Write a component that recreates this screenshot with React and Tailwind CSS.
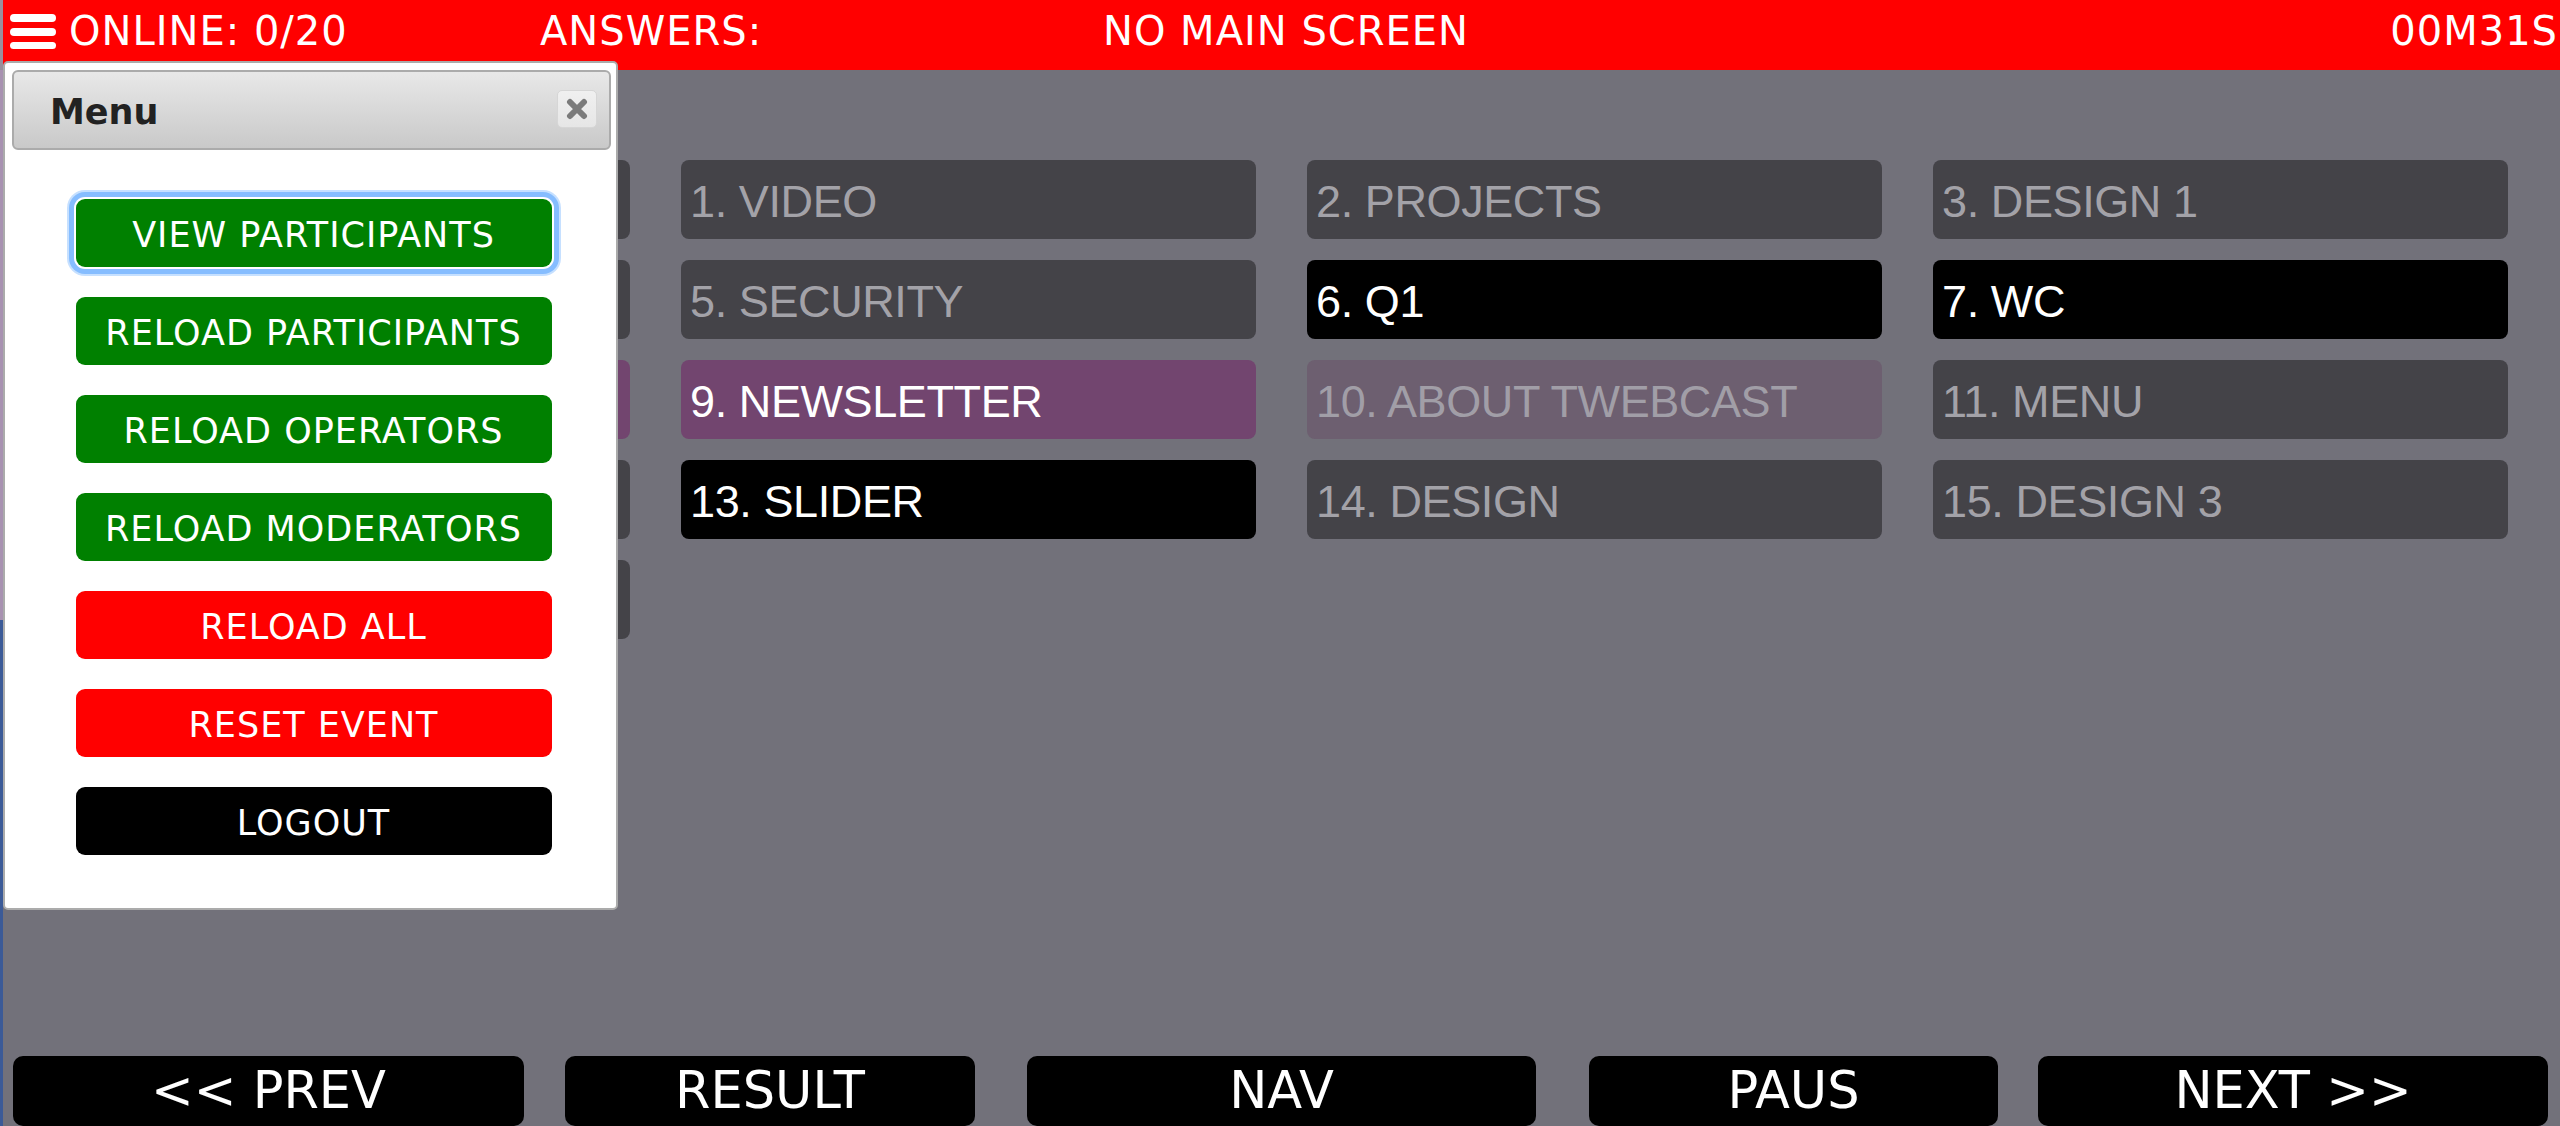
import React from "react";

const tiles = [
  { t: "", k: "g" },
  { t: "1. VIDEO", k: "g" },
  { t: "2. PROJECTS", k: "g" },
  { t: "3. DESIGN 1", k: "g" },
  { t: "", k: "g" },
  { t: "5. SECURITY", k: "g" },
  { t: "6. Q1", k: "b" },
  { t: "7. WC", k: "b" },
  { t: "", k: "p" },
  { t: "9. NEWSLETTER", k: "p" },
  { t: "10. ABOUT TWEBCAST", k: "f" },
  { t: "11. MENU", k: "g" },
  { t: "", k: "g" },
  { t: "13. SLIDER", k: "b" },
  { t: "14. DESIGN", k: "g" },
  { t: "15. DESIGN 3", k: "g" },
  { t: "", k: "g" },
];

const tileCls = {
  g: "bg-[#444348] text-[#a3a2a8]",
  b: "bg-black text-white",
  p: "bg-[#72456f] text-white",
  f: "bg-[#6d5f70] text-[#a19ea7]",
};

function Tile({ t, k }) {
  return (
    <div
      className={`h-[79px] rounded-[8px] flex items-center pl-[9px] pt-[3px] text-[45px] leading-none tracking-[-0.4px] whitespace-nowrap overflow-hidden ${tileCls[k]}`}
      style={{ fontFamily: '"Liberation Sans", Arial, sans-serif' }}
    >
      {t}
    </div>
  );
}

function MenuButton({ label, color, focused }) {
  return (
    <div
      className={`w-[476px] h-[68px] rounded-[9px] flex items-center justify-center pt-[4px] text-white text-[35px] leading-none tracking-[1px] ${color} ${
        focused ? "shadow-[0_0_0_2px_#ffffff,0_0_0_7px_#86bdff,0_0_0_9px_#c6e0ff]" : ""
      }`}
    >
      {label}
    </div>
  );
}

function FooterButton({ label, w, ml }) {
  return (
    <div
      className={`h-[70px] rounded-[10px] bg-black text-white flex justify-center pt-[9px] text-[51px] leading-none whitespace-nowrap ${w} ${ml}`}
    >
      {label}
    </div>
  );
}

export default function App() {
  return (
    <div className="flex w-[2560px] h-[1126px] overflow-hidden">
      <div className="w-[3px] flex flex-col shrink-0">
        <div className="h-[70px] bg-[#9a8f9c]" />
        <div className="h-[550px] bg-[#a892b1]" />
        <div className="flex-1 bg-[#3b5a97]" />
      </div>
      <div
        className="relative flex-1 flex flex-col bg-[#72717a]"
        style={{ fontFamily: '"DejaVu Sans", Verdana, sans-serif' }}
      >
        {/* Header */}
        <div className="h-[70px] bg-[#ff0000] flex items-start pl-[7px] text-white text-[40px] leading-none tracking-[1px] whitespace-nowrap shrink-0">
          <div className="w-[530px] flex items-start gap-[13px]">
            <div className="mt-[14px] flex flex-col gap-[6px]">
              <div className="w-[46px] h-[8px] rounded-full bg-white" />
              <div className="w-[46px] h-[8px] rounded-full bg-white" />
              <div className="w-[46px] h-[7px] rounded-full bg-white" />
            </div>
            <div className="mt-[11px]">ONLINE: 0/20</div>
          </div>
          <div className="w-[563px] mt-[11px]">ANSWERS:</div>
          <div className="mt-[11px]">NO MAIN SCREEN</div>
          <div className="flex-1" />
          <div className="mt-[11px] pr-[2px]">00M31S</div>
        </div>

        {/* Tiles */}
        <div className="flex-1 pt-[90px] pl-[52px]">
          <div className="grid grid-cols-[575px_575px_575px_575px] gap-x-[51px] gap-y-[21px]">
            {tiles.map((x, i) => (
              <Tile key={i} t={x.t} k={x.k} />
            ))}
          </div>
        </div>

        {/* Footer */}
        <div className="h-[70px] flex pl-[10px] shrink-0">
          <FooterButton label="<< PREV" w="w-[511px]" ml="" />
          <FooterButton label="RESULT" w="w-[410px]" ml="ml-[41px]" />
          <FooterButton label="NAV" w="w-[509px]" ml="ml-[52px]" />
          <FooterButton label="PAUS" w="w-[409px]" ml="ml-[53px]" />
          <FooterButton label="NEXT >>" w="w-[510px]" ml="ml-[40px]" />
        </div>

        {/* Menu dialog */}
        <div className="absolute left-0 top-[61px] w-[615px] h-[849px] bg-white border-2 border-[#ababab] rounded-[5px] p-[7px] pr-[5px] flex flex-col">
          <div className="h-[80px] shrink-0 rounded-[6px] border-2 border-[#ababab] bg-gradient-to-b from-[#e8e8e8] to-[#c9c9c9] flex items-start justify-between pl-[36px] pr-[12px]">
            <div className="mt-[23px] text-[35px] leading-none font-bold text-[#222222]">Menu</div>
            <div className="mt-[18px] w-[40px] h-[38px] rounded-[5px] border border-[#d6d6d6] bg-gradient-to-b from-[#f0f0f0] to-[#e6e6e6] flex items-center justify-center">
              <svg width="22" height="22" viewBox="0 0 22 22">
                <path d="M4 4 L18 18 M18 4 L4 18" stroke="#7b7b7b" strokeWidth="6" strokeLinecap="round" />
              </svg>
            </div>
          </div>
          <div className="flex flex-col items-center gap-[30px] pt-[49px] pl-[4px]">
            <MenuButton label="VIEW PARTICIPANTS" color="bg-[#008000]" focused />
            <MenuButton label="RELOAD PARTICIPANTS" color="bg-[#008000]" />
            <MenuButton label="RELOAD OPERATORS" color="bg-[#008000]" />
            <MenuButton label="RELOAD MODERATORS" color="bg-[#008000]" />
            <MenuButton label="RELOAD ALL" color="bg-[#ff0000]" />
            <MenuButton label="RESET EVENT" color="bg-[#ff0000]" />
            <MenuButton label="LOGOUT" color="bg-black" />
          </div>
        </div>
      </div>
    </div>
  );
}
